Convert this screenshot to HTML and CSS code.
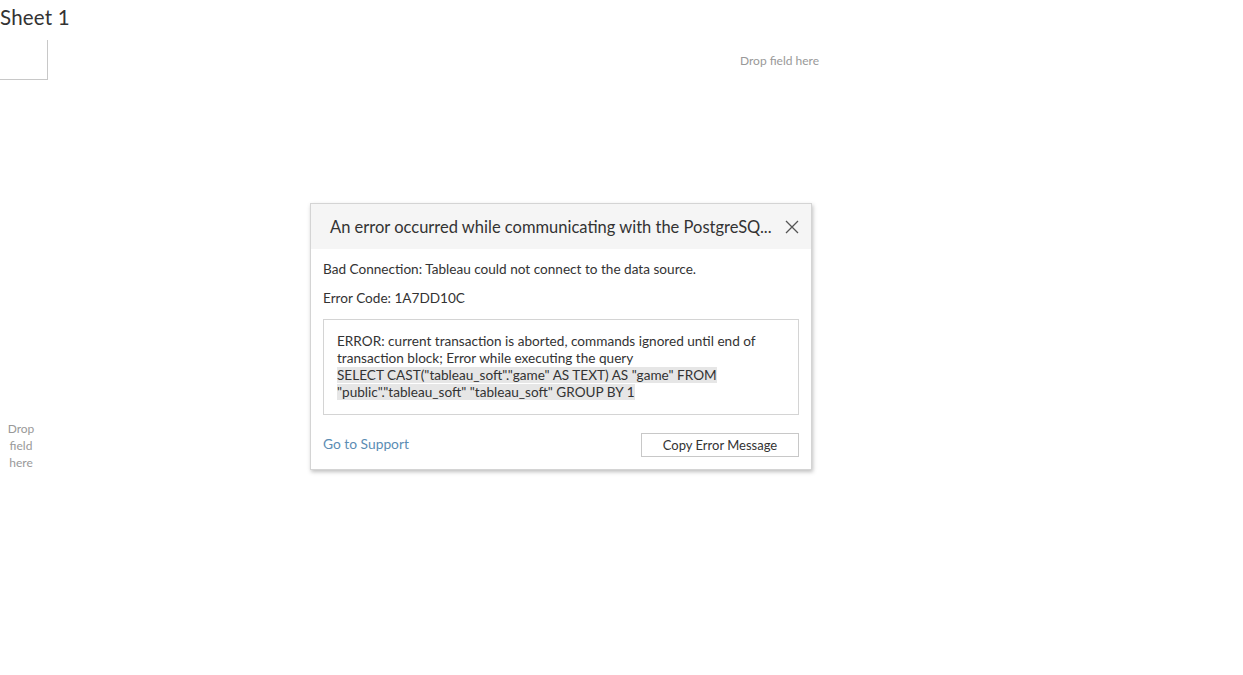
FILE: index.html
```html
<!DOCTYPE html>
<html lang="en">
<head>
  <meta charset="UTF-8">
  <title>Sheet 1</title>
  <link rel="stylesheet" href="styles.css">
</head>
<body>
  <h1 class="sheet-title">Sheet 1</h1>
  <div class="shelves">
    <div class="corner"></div>
    <div class="col-drop">Drop field here</div>
  </div>
  <div class="row-drop">Drop<br>field<br>here</div>

  <div class="dialog">
    <div class="dialog-head">
      <span class="dialog-title">An error occurred while communicating with the PostgreSQ...</span>
      <svg class="close" width="14" height="14" viewBox="0 0 14 14">
        <path d="M1 1 L13 13 M13 1 L1 13" stroke="#555" stroke-width="1.3" fill="none"/>
      </svg>
    </div>
    <div class="dialog-body">
      <p>Bad Connection: Tableau could not connect to the data source.</p>
      <p>Error Code: 1A7DD10C</p>
      <div class="details">
        ERROR: current transaction is aborted, commands ignored until end of transaction block; Error while executing the query<br>
        <span class="query">SELECT CAST("tableau_soft"."game" AS TEXT) AS "game" FROM<br>"public"."tableau_soft" "tableau_soft" GROUP BY 1</span>
      </div>
      <div class="dialog-foot">
        <a class="support" href="#">Go to Support</a>
        <button class="copy">Copy Error Message</button>
      </div>
    </div>
  </div>
</body>
</html>
```

FILE: styles.css
```css
body {
  margin: 0;
  font-family: Lato, "Open Sans", sans-serif;
  background: #fff;
  color: #333;
}

.sheet-title {
  margin: 0;
  padding-top: 5px;
  height: 35px;
  font-size: 20.5px;
  font-weight: normal;
  color: #333;
  letter-spacing: 0.2px;
}

.shelves {
  display: flex;
  height: 40px;
}

.corner {
  width: 48px;
  border-right: 1px solid #c8c8c8;
  border-bottom: 1px solid #c8c8c8;
  box-sizing: border-box;
}

.col-drop {
  padding-left: 692px;
  padding-top: 13px;
  font-size: 12px;
  color: #999;
}

.row-drop {
  width: 42px;
  margin-top: 340px;
  text-align: center;
  font-size: 12px;
  line-height: 17px;
  color: #999;
}

.dialog {
  position: absolute;
  left: 310px;
  top: 203px;
  width: 500px;
  background: #fff;
  border: 1px solid #d4d4d4;
  box-shadow: 1px 2px 4px rgba(0, 0, 0, 0.25);
}

.dialog-head {
  display: flex;
  align-items: center;
  justify-content: space-between;
  height: 45px;
  padding: 0 12px 0 19px;
  background: #f5f5f5;
}

.dialog-title {
  font-size: 16.5px;
  color: #333;
}

.dialog-body {
  padding: 12px 12px 12px 12px;
  font-size: 13.6px;
  color: #333;
}

.dialog-body p {
  margin: 0 0 12px;
  line-height: 17px;
}

.details {
  margin-top: 4px;
  border: 1px solid #d4d4d4;
  padding: 13px 14px 13px 13px;
  line-height: 17px;
  min-height: 68px;
}

.query {
  background: #e6e6e6;
}

.dialog-foot {
  display: flex;
  justify-content: space-between;
  align-items: center;
  margin-top: 18px;
}

.support {
  color: #5b8db4;
  text-decoration: none;
  font-size: 13.8px;
  margin-bottom: 3px;
}

.copy {
  width: 158px;
  height: 24px;
  background: #fff;
  border: 1px solid #c8c8c8;
  font-family: Lato, "Open Sans", sans-serif;
  font-size: 13px;
  color: #333;
  padding: 0;
}
```
